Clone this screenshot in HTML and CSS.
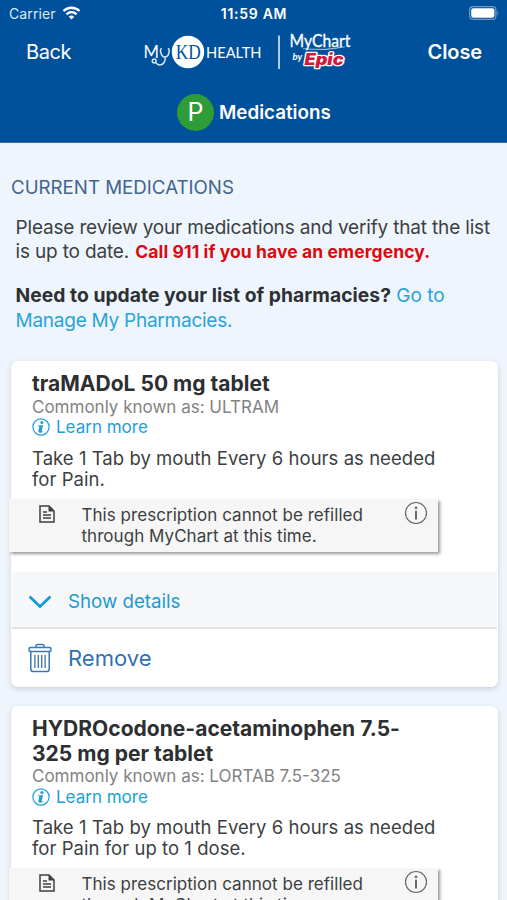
FILE: index.html
```html
<!DOCTYPE html>
<html lang="en">
<head>
<meta charset="utf-8">
<title>Medications</title>
<link rel="stylesheet" href="styles.css">
</head>
<body>
<svg class="defs" width="0" height="0" aria-hidden="true">
  <symbol id="learn" viewBox="0 0 18 18"><circle cx="9" cy="9" r="8.1" fill="none" stroke="currentColor" stroke-width="1.2"/><circle cx="9.9" cy="4.500" r="1.600" fill="currentColor"/><path d="M6.200 7.300h4.900L9.700 13c0 .5.600.3 1.500-.3-.8 1.500-2 2.200-3.200 2.100-1.400-.1-1.900-1-1.600-2.200l1-4.100-1.400-.4z" fill="currentColor"/></symbol>
  <symbol id="doc" viewBox="0 0 16 18"><path d="M1 1h9l5 5v11H1z" fill="none" stroke="currentColor" stroke-width="1.5"/><path d="M9.5 1v5.5H15z" fill="currentColor"/><path d="M4 7h4M4 10h8M4 13h8" stroke="currentColor" stroke-width="1.3"/></symbol>
  <symbol id="info" viewBox="0 0 24 24"><circle cx="12" cy="12" r="10.5" fill="none" stroke="currentColor" stroke-width="1.2"/><circle cx="12" cy="6.8" r="1.4" fill="currentColor"/><path d="M12 9.7v8.7" stroke="currentColor" stroke-width="2"/></symbol>
</svg>
<header class="header">
  <div class="status">
    <div class="carrier"><span>Carrier</span>
      <svg width="19" height="14" viewBox="0 0 18 14" fill="none" stroke="#fff" stroke-width="2.4"><path d="M1 5C5.500.7 12.500.7 17 5"/><path d="M4 8.300c2.900-2.700 7.100-2.700 10 0"/><path d="M6.300 10.700Q9 8.300 11.700 10.700L9 13.500z" fill="#fff" stroke="none"/></svg>
    </div>
    <div class="clock">11:59 AM</div>
    <svg class="battery" width="30" height="14" viewBox="0 0 30 14"><rect x=".6" y=".6" width="26.300" height="12.800" rx="3.500" fill="none" stroke="#6d99c6" stroke-width="1.200"/><rect x="2.200" y="2.200" width="23.200" height="9.600" rx="2" fill="#fff"/><path d="M28.200 4.700q2 2.300 0 4.600z" fill="#6d99c6"/></svg>
  </div>
  <nav class="nav">
    <a class="back">Back</a>
    <svg class="logo" width="210" height="44" viewBox="142 30 210 44">
      <g fill="#fff">
        <text x="143.500" y="57.500" font-family="Lato" font-size="18" textLength="15.500" lengthAdjust="spacingAndGlyphs">M</text>
        <g fill="none" stroke="#d6e6f5" stroke-width="1.500"><path d="M161.800 48.500c-1.500 0-1.500 2-1 4 .7 3 2 4.500 4 4.500s3.600-1.500 4.200-4.500c.4-2 .3-4-1.200-4"/><path d="M165 57c.8 4-1.500 8-5 8-2.500 0-3.500-1-4-2.600"/><circle cx="154.200" cy="61" r="1.900"/></g>
        <circle cx="188" cy="52" r="16.200"/>
        <text x="175.800" y="58.700" fill="#00519c" font-family="Liberation Serif" font-size="20" textLength="25" lengthAdjust="spacingAndGlyphs">KD</text>
        <text x="206" y="57.500" font-family="Lato" font-size="15" textLength="55.500" lengthAdjust="spacingAndGlyphs">HEALTH</text>
        <rect x="278.300" y="35.500" width="1.400" height="33.500"/>
        <text x="289.500" y="47" font-family="Lato" font-size="16.500" stroke="#fff" stroke-width=".3" textLength="61" lengthAdjust="spacingAndGlyphs">MyChart</text>
        <path d="M303 48.700q21 2 42-1.900-20 4.700-42 1.900z" stroke="#fff" stroke-width=".3"/>
        <text x="292.500" y="60" font-family="Lato" font-size="9.500" font-weight="700" font-style="italic">by</text>
        <text x="304.500" y="65" fill="#d5163d" stroke="#fff" stroke-width="2.600" stroke-linejoin="round" paint-order="stroke" font-family="Inter" font-size="15.500" font-weight="900" font-style="italic" textLength="39" lengthAdjust="spacingAndGlyphs">Epic</text>
      </g>
    </svg>
    <a class="close">Close</a>
  </nav>
  <div class="page-title"><span class="avatar">P</span><h1>Medications</h1></div>
</header>
<main>
  <h2>CURRENT MEDICATIONS</h2>
  <div class="intro">
    <p><span class="review">Please review your medications and verify that the list<br>is up to date.</span> <strong class="alert">Call 911 if you have an emergency.</strong></p>
    <p><strong class="need">Need to update your list of pharmacies?</strong> <a>Go to<br><span class="manage">Manage My Pharmacies.</span></a></p>
  </div>
  <article class="card">
    <div class="body">
      <h3>traMADoL 50 mg tablet</h3>
      <div class="known">Commonly known as: ULTRAM</div>
      <a class="learn"><svg width="18" height="18"><use href="#learn"/></svg><span>Learn more</span></a>
      <p class="dose">Take 1 Tab by mouth Every 6 hours as needed<br>for Pain.</p>
    </div>
    <div class="note"><svg class="doc" width="16" height="18"><use href="#doc"/></svg><p>This prescription cannot be refilled<br>through MyChart at this time.</p><svg class="info" width="24" height="24"><use href="#info"/></svg></div>
    <a class="row details"><svg width="24" height="14" viewBox="0 0 24 14"><path d="M1.500 1.500 12 11.500 22.500 1.500" fill="none" stroke="#159bd3" stroke-width="2.800"/></svg><span>Show details</span></a>
    <a class="row remove"><svg width="24" height="30" viewBox="0 0 24 30" fill="none" stroke="#3c77b5" stroke-width="1.500"><path d="M8 4.500V3.200q0-1.700 1.700-1.700h4.600Q16 1.500 16 3.200v1.300"/><rect x="1" y="4.500" width="22" height="4" rx="1.500"/><path d="M2.800 8.500v17.800q0 2.200 2.200 2.200h14q2.200 0 2.200-2.200V8.500"/><path d="M6.900 12v13M10.300 12v13M13.700 12v13M17.100 12v13" stroke-width="1.300"/></svg><span>Remove</span></a>
  </article>
  <article class="card">
    <div class="body">
      <h3>HYDROcodone-acetaminophen 7.5-<br>325 mg per tablet</h3>
      <div class="known">Commonly known as: LORTAB 7.5-325</div>
      <a class="learn"><svg width="18" height="18"><use href="#learn"/></svg><span>Learn more</span></a>
      <p class="dose">Take 1 Tab by mouth Every 6 hours as needed<br>for Pain for up to 1 dose.</p>
    </div>
    <div class="note"><svg class="doc" width="16" height="18"><use href="#doc"/></svg><p>This prescription cannot be refilled<br>through MyChart at this time.</p><svg class="info" width="24" height="24"><use href="#info"/></svg></div>
  </article>
</main>
</body>
</html>
```
FILE: styles.css
```css
* { box-sizing: border-box; }
body { margin: 0; height: 900px; overflow: hidden; background: #eff5fc; font-family: Inter, "Liberation Sans", sans-serif; color: #3c3f42; white-space: nowrap; }
h1, h2, h3, p { margin: 0; }
.defs { display: block; height: 0; }
.header { height: 143px; background: #00519c; color: #fff; border-bottom: 1px solid #376f9f; }
.status { height: 28px; display: grid; grid-template-columns: 1fr auto 1fr; align-items: center; padding: 0 8px 0 9px; }
.carrier { display: flex; align-items: center; gap: 6px; font-size: 14px; letter-spacing: .1px; color: #dce9f5; }
.carrier svg { margin-top: -2px; }
.clock { font-size: 14px; font-weight: 600; letter-spacing: .7px; margin-top: -1px; }
.carrier span { margin-top: -1px; }
.battery { justify-self: end; margin-top: -2px; }
.nav { height: 48px; display: flex; align-items: center; justify-content: space-between; padding: 0 25px 0 26px; font-size: 20px; }
.back { width: 47px; letter-spacing: -.4px; }
.logo { margin-left: 46px; margin-right: 52px; }
.close { font-weight: 600; font-size: 20px; letter-spacing: -.1px; }
.page-title { height: 72px; display: flex; align-items: center; gap: 5px; padding-left: 177px; }
.avatar { width: 37px; height: 37px; border-radius: 50%; background: #2e9d38; display: grid; place-items: center; font-size: 25px; }
h1 { font-size: 18.800px; font-weight: 600; }
h2 { padding: 33px 0 0 11px; font-size: 18.700px; line-height: 24px; font-weight: 400; color: #42648d; }
.intro { height: 162px; padding: 15.500px 0 0 15.500px; font-size: 19px; line-height: 24.500px; }
.intro p + p { margin-top: 18.500px; }
.intro a { color: #27a4da; }
.review { letter-spacing: -.17px; }
.manage { letter-spacing: -.25px; }
.alert { color: #d90b10; font-size: 17.500px; letter-spacing: .1px; margin-left: 1px; }
.need { color: #2d3033; font-size: 19.300px; letter-spacing: .03px; }
.card { width: 487px; margin: 0 0 19px 10.500px; padding-top: 11px; border-radius: 7px; background: #fff; box-shadow: 0 2px 5px #a9afb688; }
.card:first-of-type { margin-top: -1px; }
.body { padding: 0 0 0 21.500px; }
h3 { font-size: 21px; line-height: 24.500px; color: #2d2f31; letter-spacing: .02px; }
.known { font-size: 17px; line-height: 20px; color: #828282; }
.learn { display: flex; align-items: center; gap: 6px; height: 21px; font-size: 17px; color: #1da0d8; }
.dose { padding-top: 10px; font-size: 18.500px; line-height: 21px; letter-spacing: .04px; }
.note { width: 429px; height: 53px; margin: 9px 0 20px -2px; padding: 6px 0 0 30.500px; background: #f6f6f6; box-shadow: 2px 2px 3px #999; clip-path: inset(0 -8px -8px 0); display: flex; align-items: flex-start; font-size: 17px; line-height: 21px; letter-spacing: .04px; }
.note .doc { margin: 0 26.500px 0 0; }
.note p { width: 322px; }
.note .info { margin-top: -4px; color: #68696a; }
.row { display: flex; align-items: center; gap: 16px; padding-left: 17.500px; }
.details { height: 57px; padding: 5px 0 0 16.500px; background: #f6f7f8; border-bottom: 2px solid #e1e4e6; color: #1c9bd0; font-size: 18.700px; margin: 0 1px; }
.remove { height: 58.500px; color: #3270b0; font-size: 22px; }
```
